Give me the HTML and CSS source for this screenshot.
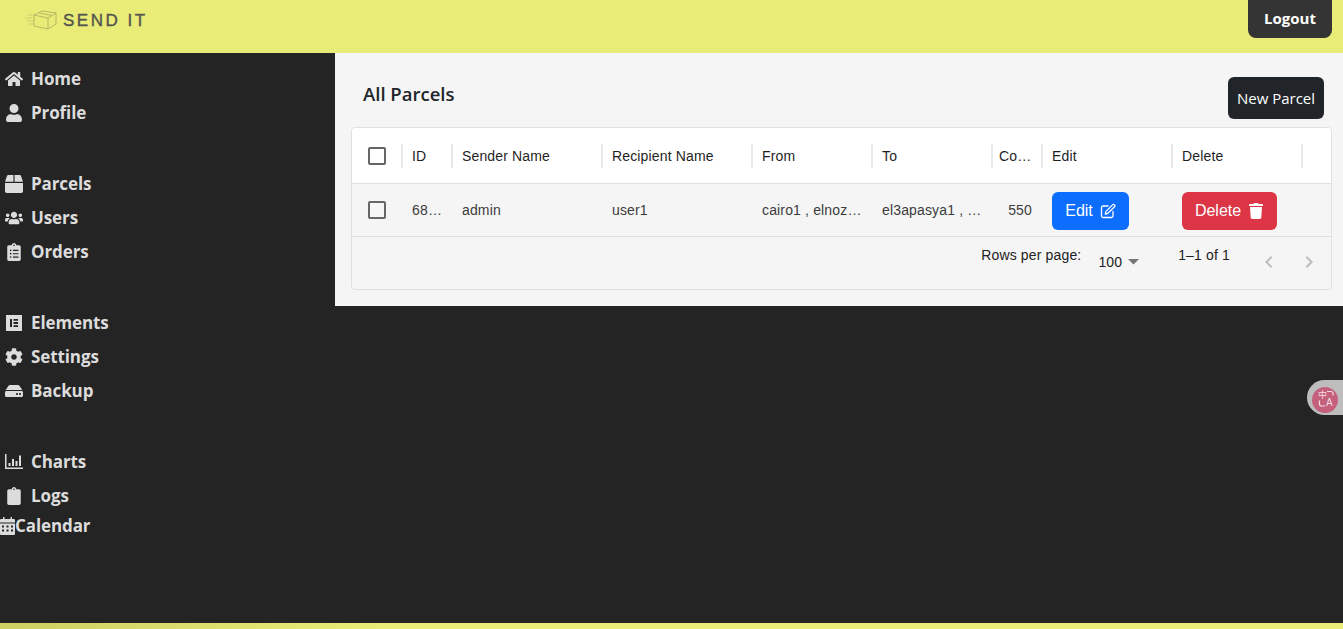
FILE: index.html
```html
<!DOCTYPE html>
<html lang="en">
<head>
<meta charset="utf-8">
<title>All Parcels</title>
<link rel="stylesheet" href="styles.css">
</head>
<body>
<div class="page">
  <header class="topbar">
    <div class="logo">
      <svg class="logo-mark" viewBox="0 0 33 22" fill="none" stroke="#a9ab66" stroke-width="0.8">
        <path d="M9 6 17 2 31 4 31 15 23 20 9 17Z"/>
        <path d="M9 6 23 9 31 4M23 9V20M14 4 27 6.500"/>
        <path d="M0 9H7M2 12H8M4 15H8M3 6H8" stroke="#c6c872"/>
      </svg>
      <span class="logo-text">SEND IT</span>
    </div>
    <button class="logout">Logout</button>
  </header>

  <div class="middle">
    <nav class="sidebar">
      <div class="group">
        <a class="item"><span class="ico"><svg viewBox="0 0 576 512"><path d="M280.37 148.26L96 300.11V464a16 16 0 0 0 16 16l112.06-.29a16 16 0 0 0 15.92-16V368a16 16 0 0 1 16-16h64a16 16 0 0 1 16 16v95.64a16 16 0 0 0 16 16.05L464 480a16 16 0 0 0 16-16V300L295.67 148.26a12.19 12.19 0 0 0-15.3 0zM571.6 251.47L488 182.56V44.05a12 12 0 0 0-12-12h-56a12 12 0 0 0-12 12v72.61L318.47 43a48 48 0 0 0-61 0L4.34 251.47a12 12 0 0 0-1.6 16.9l25.5 31A12 12 0 0 0 45.15 301l235.22-193.74a12.19 12.19 0 0 1 15.3 0L530.9 301a12 12 0 0 0 16.9-1.6l25.5-31a12 12 0 0 0-1.7-16.93z"/></svg></span>Home</a>
        <a class="item"><span class="ico"><svg viewBox="0 0 448 512"><path d="M224 256c70.7 0 128-57.3 128-128S294.7 0 224 0 96 57.3 96 128s57.3 128 128 128zm89.6 32h-16.7c-22.2 10.2-46.9 16-72.9 16s-50.6-5.8-72.9-16h-16.7C60.2 288 0 348.2 0 422.4V464c0 26.5 21.5 48 48 48h352c26.5 0 48-21.5 48-48v-41.6c0-74.2-60.2-134.4-134.4-134.4z"/></svg></span>Profile</a>
      </div>
      <div class="group">
        <a class="item"><span class="ico"><svg viewBox="0 0 512 512"><path d="M509.5 184.6L458.9 32.8C452.4 13.2 434.1 0 413.4 0H272v192h238.7c-.4-2.5-.4-5-1.2-7.4zM240 0H98.6c-20.7 0-39 13.2-45.5 32.8L2.5 184.6c-.8 2.4-.8 4.9-1.2 7.4H240V0zM0 224v240c0 26.5 21.5 48 48 48h416c26.5 0 48-21.5 48-48V224H0z"/></svg></span>Parcels</a>
        <a class="item"><span class="ico"><svg viewBox="0 0 640 512"><path d="M96 224c35.3 0 64-28.7 64-64s-28.7-64-64-64-64 28.7-64 64 28.7 64 64 64zm448 0c35.3 0 64-28.7 64-64s-28.7-64-64-64-64 28.7-64 64 28.7 64 64 64zm32 32h-64c-17.6 0-33.5 7.1-45.1 18.6 40.3 22.1 68.9 62 75.1 109.4h66c17.7 0 32-14.3 32-32v-32c0-35.3-28.7-64-64-64zm-256 0c61.9 0 112-50.1 112-112S381.9 32 320 32 208 82.1 208 144s50.1 112 112 112zm76.8 32h-8.3c-20.8 10-43.9 16-68.5 16s-47.6-6-68.5-16h-8.3C179.6 288 128 339.6 128 403.2V432c0 26.5 21.5 48 48 48h288c26.5 0 48-21.5 48-48v-28.8c0-63.6-51.6-115.2-115.2-115.2zm-223.7-13.4C161.5 263.1 145.6 256 128 256H64c-35.3 0-64 28.7-64 64v32c0 17.7 14.3 32 32 32h65.9c6.3-47.4 34.9-87.3 75.2-109.4z"/></svg></span>Users</a>
        <a class="item"><span class="ico"><svg viewBox="0 0 384 512"><path d="M336 64h-80c0-35.3-28.7-64-64-64s-64 28.7-64 64H48C21.5 64 0 85.5 0 112v352c0 26.5 21.5 48 48 48h288c26.5 0 48-21.5 48-48V112c0-26.5-21.5-48-48-48zM96 424c-13.3 0-24-10.7-24-24s10.7-24 24-24 24 10.7 24 24-10.7 24-24 24zm0-96c-13.3 0-24-10.7-24-24s10.7-24 24-24 24 10.7 24 24-10.7 24-24 24zm0-96c-13.3 0-24-10.7-24-24s10.7-24 24-24 24 10.7 24 24-10.7 24-24 24zm96-192c13.3 0 24 10.7 24 24s-10.7 24-24 24-24-10.7-24-24 10.7-24 24-24zm128 368c0 4.4-3.6 8-8 8H168c-4.4 0-8-3.6-8-8v-16c0-4.4 3.6-8 8-8h144c4.4 0 8 3.6 8 8v16zm0-96c0 4.4-3.6 8-8 8H168c-4.4 0-8-3.6-8-8v-16c0-4.4 3.6-8 8-8h144c4.4 0 8 3.6 8 8v16zm0-96c0 4.4-3.6 8-8 8H168c-4.4 0-8-3.6-8-8v-16c0-4.4 3.6-8 8-8h144c4.4 0 8 3.6 8 8v16z"/></svg></span>Orders</a>
      </div>
      <div class="group">
        <a class="item"><span class="ico"><svg viewBox="0 0 18 18"><path fill-rule="evenodd" d="M1 1H17V17H1ZM5 5V13H7V5ZM8.500 5V6.800H13V5ZM8.500 8.100V9.900H13V8.100ZM8.500 11.200V13H13V11.200Z"/></svg></span>Elements</a>
        <a class="item"><span class="ico"><svg viewBox="0 0 512 512"><path d="M487.4 315.7l-42.6-24.6c4.3-23.2 4.3-47 0-70.2l42.6-24.6c4.9-2.8 7.1-8.6 5.5-14-11.1-35.6-30-67.8-54.7-94.6-3.8-4.1-10-5.1-14.8-2.3L380.8 110c-17.9-15.4-38.5-27.3-60.8-35.1V25.800c0-5.600-3.900-10.500-9.400-11.700-36.700-8.200-74.300-7.800-109.200 0-5.500 1.200-9.400 6.100-9.400 11.700V75c-22.200 7.900-42.800 19.800-60.800 35.100L88.700 85.500c-4.900-2.800-11-1.900-14.800 2.300-24.700 26.700-43.600 58.900-54.700 94.600-1.700 5.400.6 11.200 5.500 14L67.300 221c-4.300 23.200-4.300 47 0 70.200l-42.600 24.600c-4.900 2.800-7.100 8.600-5.500 14 11.100 35.600 30 67.800 54.700 94.600 3.800 4.100 10 5.100 14.800 2.300l42.600-24.600c17.900 15.400 38.500 27.300 60.800 35.100v49.200c0 5.600 3.900 10.500 9.400 11.700 36.700 8.200 74.300 7.800 109.200 0 5.500-1.200 9.400-6.100 9.400-11.700v-49.200c22.200-7.900 42.800-19.800 60.800-35.100l42.600 24.600c4.900 2.800 11 1.900 14.800-2.300 24.700-26.700 43.600-58.900 54.700-94.600 1.500-5.500-.7-11.300-5.600-14.100zM256 336c-44.100 0-80-35.900-80-80s35.900-80 80-80 80 35.900 80 80-35.900 80-80 80z"/></svg></span>Settings</a>
        <a class="item"><span class="ico"><svg viewBox="0 0 576 512"><path d="M576 304v96c0 26.51-21.49 48-48 48H48c-26.51 0-48-21.49-48-48v-96c0-26.51 21.49-48 48-48h480c26.51 0 48 21.49 48 48zm-48-80a79.557 79.557 0 0 1 30.777 6.165L462.25 85.374A48.003 48.003 0 0 0 422.311 64H153.689a48 48 0 0 0-39.938 21.374L17.223 230.165A79.557 79.557 0 0 1 48 224h480zm-48 96c-17.673 0-32 14.327-32 32s14.327 32 32 32 32-14.327 32-32-14.327-32-32-32zm-96 0c-17.673 0-32 14.327-32 32s14.327 32 32 32 32-14.327 32-32-14.327-32-32-32z"/></svg></span>Backup</a>
      </div>
      <div class="group">
        <a class="item"><span class="ico"><svg viewBox="0 0 18 18"><path d="M0 1H1.500V14.500H18V16H0ZM3.500 10H5.500V13H3.500ZM7 6H9V13H7ZM10.500 8H12.500V13H10.500ZM14 2.500H16V13H14Z"/></svg></span>Charts</a>
        <a class="item"><span class="ico"><svg viewBox="0 0 384 512"><path d="M336 64h-80c0-35.300-28.700-64-64-64s-64 28.700-64 64H48C21.500 64 0 85.500 0 112v352c0 26.500 21.500 48 48 48h288c26.500 0 48-21.500 48-48V112c0-26.500-21.500-48-48-48zM192 40c13.300 0 24 10.700 24 24s-10.700 24-24 24-24-10.700-24-24 10.700-24 24-24z"/></svg></span>Logs</a>
        <a class="item item-flush"><span class="ico ico-flush"><svg viewBox="0 0 15 18"><path fill-rule="evenodd" d="M3 0H4.500V2H10.500V0H12V2H14A1 1 0 0 1 15 3V5.500H0V3A1 1 0 0 1 1 2H3ZM0 6.500H15V17A1 1 0 0 1 14 18H1A1 1 0 0 1 0 17ZM2 8.500V10.500H4V8.500ZM6.500 8.500V10.500H8.500V8.500ZM11 8.500V10.500H13V8.500ZM2 12.500V14.500H4V12.500ZM6.500 12.500V14.500H8.500V12.500ZM11 12.500V14.500H13V12.500Z"/></svg></span>Calendar</a>
      </div>
    </nav>

    <main class="content">
      <section class="panel">
        <div class="panel-head">
          <h1 class="title">All Parcels</h1>
          <button class="new-parcel">New Parcel</button>
        </div>
        <div class="card">
          <div class="cols head-row">
            <div class="cell cell-check"><span class="check"></span></div>
            <div class="cell sep">ID</div>
            <div class="cell sep">Sender Name</div>
            <div class="cell sep">Recipient Name</div>
            <div class="cell sep">From</div>
            <div class="cell sep">To</div>
            <div class="cell sep"><span class="clip clip-cost">Cost Value</span></div>
            <div class="cell sep">Edit</div>
            <div class="cell sep">Delete</div>
            <div class="cell sep"></div>
          </div>
          <div class="cols data-row">
            <div class="cell cell-check"><span class="check"></span></div>
            <div class="cell"><span class="clip">68a1</span></div>
            <div class="cell">admin</div>
            <div class="cell">user1</div>
            <div class="cell"><span class="clip">cairo1 , elnozha1 street</span></div>
            <div class="cell"><span class="clip">el3apasya1 , ahmed street</span></div>
            <div class="cell cell-num">550</div>
            <div class="cell"><button class="action edit">Edit
              <svg class="action-ico" viewBox="0 0 16 16" fill="none" stroke="#fff" stroke-width="1.300" stroke-linejoin="round" stroke-linecap="round"><path d="M8 3H3A1.500 1.500 0 0 0 1.500 4.500V13A1.500 1.500 0 0 0 3 14.500H11.500A1.500 1.500 0 0 0 13 13V8.500"/><path d="M5.800 8.600 12.500 1.900A1.300 1.300 0 0 1 14.500 3.800L7.700 10.500 5.300 11Z"/></svg></button></div>
            <div class="cell"><button class="action delete">Delete
              <svg class="action-ico" viewBox="0 0 448 512" fill="#fff"><path d="M432 32H312l-9.400-18.700A24 24 0 0 0 281.100 0H166.800a23.720 23.720 0 0 0-21.400 13.300L136 32H16A16 16 0 0 0 0 48v32a16 16 0 0 0 16 16h416a16 16 0 0 0 16-16V48a16 16 0 0 0-16-16zM53.200 467a48 48 0 0 0 47.900 45h245.800a48 48 0 0 0 47.900-45L416 128H32z"/></svg></button></div>
            <div class="cell"></div>
          </div>
          <div class="pager">
            <span class="pager-label">Rows per page:</span>
            <span class="pager-select">100<svg class="caret" viewBox="0 0 10 5"><path d="M0 0H10L5 5Z"/></svg></span>
            <span class="pager-count">1–1 of 1</span>
            <span class="pager-nav">
              <svg viewBox="0 0 24 24"><path d="M15.410 7.410 14 6l-6 6 6 6 1.410-1.410L10.830 12z"/></svg>
              <svg viewBox="0 0 24 24"><path d="M10 6 8.590 7.410 13.170 12l-4.580 4.590L10 18l6-6z"/></svg>
            </span>
          </div>
        </div>
      </section>
    </main>
  </div>

  <div class="bottombar"></div>

  <div class="translate">
    <span class="translate-dot">
      <svg class="tr-arcs" viewBox="0 0 26 26" fill="none" stroke="#f3dbe2" stroke-width="1.200"><path d="M7.500 13.500V17A2 2 0 0 0 9.500 19H13M15 4.500H19A2 2 0 0 1 21 6.500V8.500"/></svg>
      <span class="tr-zh">中</span><span class="tr-en">A</span>
    </span>
  </div>
</div>
</body>
</html>
```

FILE: styles.css
```css
* { box-sizing: border-box; }

html, body { margin: 0; padding: 0; height: 100%; overflow: hidden; }

body { font-family: "Liberation Sans", Arial, sans-serif; background: #242424; }

.page { position: relative; height: 100vh; display: flex; flex-direction: column; }

.topbar {
  height: 53px;
  flex: none;
  background: #e9ec76;
  display: flex;
  justify-content: space-between;
  align-items: flex-start;
  padding: 0 11px 0 25px;
}

.logo { display: flex; align-items: center; gap: 5px; height: 40px; }
.logo-mark { width: 33px; height: 22px; }
.logo-text {
  font-family: "Liberation Sans", Arial, sans-serif;
  font-size: 17px;
  letter-spacing: 2.500px;
  color: #55554f;
  -webkit-text-stroke: 0.4px #55554f;
  white-space: nowrap;
  padding-top: 2px;
}

.logout {
  height: 38px;
  width: 84px;
  border: 0;
  border-radius: 0 0 8px 8px;
  background: #343434;
  color: #fff;
  font-family: "Open Sans", sans-serif;
  font-weight: 700;
  font-size: 15px;
  padding: 0 0 2px;
}

.middle { flex: 1; display: flex; min-height: 0; }

.sidebar {
  width: 335px;
  flex: none;
  background: #242424;
  padding-top: 8px;
  display: flex;
  flex-direction: column;
  gap: 37px;
}

.group { display: flex; flex-direction: column; }

.item {
  height: 34px;
  display: flex;
  align-items: center;
  color: #dcdcdc;
  font-family: "Open Sans", sans-serif;
  font-weight: 700;
  font-size: 17px;
  letter-spacing: -0.1px;
}

.item-flush { height: 26px; }

.ico {
  width: 31px;
  padding-left: 5px;
  margin-top: 2px;
  flex: none;
  display: flex;
}

.ico svg { width: 18px; height: 18px; fill: #dcdcdc; display: block; }

.ico-flush { width: 15px; padding-left: 0; }
.ico-flush svg { width: 15px; }

.content { flex: 1; min-width: 0; background: #242424; }

.panel { height: 253px; background: #f5f5f5; padding: 0 11px 0 16px; }

.panel-head {
  height: 74px;
  display: flex;
  justify-content: space-between;
  padding: 24px 8px 0 12px;
}

.title {
  margin: 0;
  font-family: "Open Sans", sans-serif;
  font-weight: 600;
  font-size: 18.500px;
  line-height: 34px;
  color: #212529;
}

.new-parcel {
  width: 96px;
  height: 42px;
  border: 0;
  border-radius: 6px;
  background: #212529;
  color: #fff;
  font-family: "Open Sans", sans-serif;
  font-size: 15px;
  padding: 0;
}

.card {
  height: 163px;
  border: 1px solid #e0e0e0;
  border-radius: 4px;
  font-size: 14px;
  letter-spacing: 0.01071em;
  color: #1f1f1f;
  overflow: hidden;
}

.cols {
  display: grid;
  grid-template-columns: 50px 50px 150px 150px 120px 120px 50px 130px 130px 1fr;
  align-items: center;
  border-bottom: 1px solid #e0e0e0;
}

.head-row { height: 56px; background: #fff; }
.data-row { height: 53px; color: #3c3c3c; }

.cell { padding: 0 10px; height: 100%; display: flex; align-items: center; position: relative; min-width: 0; white-space: nowrap; }

.sep::before {
  content: "";
  position: absolute;
  left: -1px;
  top: 16px;
  width: 2px;
  height: 24px;
  background: #e9e9e9;
}

.cell-check { padding: 0 0 0 16px; }
.cell-num { justify-content: flex-end; }

.check { width: 18px; height: 18px; border: 2px solid #666; border-radius: 2px; display: block; }

.clip { overflow: hidden; text-overflow: ellipsis; white-space: nowrap; display: block; }
.clip-cost { flex: none; width: 33px; margin-left: -3px; }

.action {
  height: 38px;
  margin-top: 1px;
  border: 0;
  border-radius: 6px;
  color: #fff;
  font-family: "Liberation Sans", Arial, sans-serif;
  font-size: 16px;
  display: flex;
  align-items: center;
  justify-content: center;
  gap: 7px;
  padding: 0;
}

.edit { width: 77px; background: #0d6efd; }
.delete { width: 95px; background: #dc3545; }
.action-ico { width: 16px; height: 16px; flex: none; }

.pager {
  height: 52px;
  display: flex;
  position: relative;
  padding-right: 10px;
  justify-content: flex-end;
  color: #222;
}

.pager-label { margin: 10px 17px 0 0; line-height: 16px; }
.pager-select { margin-top: 17px; line-height: 16px; display: flex; align-items: center; gap: 6px; height: 16px; }
.caret { width: 11px; height: 5.500px; fill: #757575; }
.pager-count { margin: 10px 27px 0 39px; line-height: 16px; }
.pager-nav { display: flex; gap: 16px; margin-top: 13px; height: 24px; }
.pager-nav svg { width: 24px; height: 24px; fill: #bdbdbd; }

.bottombar {
  height: 6px;
  flex: none;
  background: linear-gradient(90deg, #cdd062 0%, #e9ec76 28%);
}

.translate {
  position: absolute;
  right: 0;
  top: 380px;
  width: 36px;
  height: 35px;
  background: #bdbdbd;
  border-radius: 18px 0 0 18px;
  padding: 7px 0 0 5px;
}

.translate-dot {
  width: 26px;
  height: 26px;
  border-radius: 50%;
  background: #c4607c;
  color: #f3dbe2;
  position: relative;
  display: block;
}

.tr-arcs { position: absolute; left: 0; top: 0; width: 26px; height: 26px; }
.tr-zh { position: absolute; left: 6px; top: 3px; font-size: 9px; line-height: 10px; font-family: "Noto Sans CJK SC", sans-serif; }
.tr-en { position: absolute; left: 14px; top: 11px; font-size: 10px; line-height: 10px; }
```
